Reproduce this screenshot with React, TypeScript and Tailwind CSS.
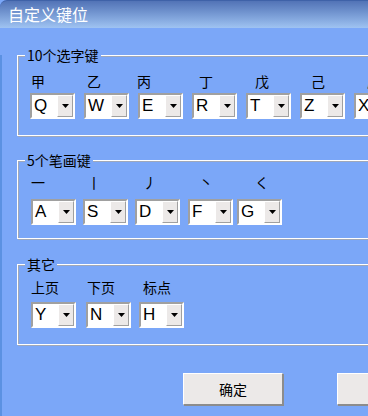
import type { ReactNode } from 'react'
import { clsx } from 'clsx'

const BODY = 'bg-[#7ba7f8]'

const stems = [
  { label: '甲', w: 'w-[56px]' },
  { label: '乙', w: 'w-[50px]' },
  { label: '丙', w: 'w-[62px]' },
  { label: '丁', w: 'w-[56px]' },
  { label: '戊', w: 'w-[56px]' },
  { label: '己', w: 'w-[56px]' },
  { label: '庚', w: 'w-[56px]' },
]
const stemKeys = ['Q', 'W', 'E', 'R', 'T', 'Z', 'X']

const strokes = ['一', '丨', '丿', '丶', 'く']
const strokeKeys = [
  { key: 'A', ml: 'ml-0' },
  { key: 'S', ml: 'ml-[7px]' },
  { key: 'D', ml: 'ml-[7px]' },
  { key: 'F', ml: 'ml-[8px]' },
  { key: 'G', ml: 'ml-[4px]' },
]

const others = ['上页', '下页', '标点']
const otherKeys = [
  { key: 'Y', ml: 'ml-0' },
  { key: 'N', ml: 'ml-[10px]' },
  { key: 'H', ml: 'ml-[8px]' },
]

function Group({ title, className, children }: { title: string; className?: string; children: ReactNode }) {
  return (
    <div
      className={clsx(
        'relative mr-[17px] border border-white pl-[13px] shadow-[inset_1px_1px_0_#a0a8b8,1px_1px_0_#a0a8b8]',
        className,
      )}
    >
      <span className={clsx('absolute -top-[10px] left-[7px] px-[2px] text-[14px] leading-[18px]', BODY)}>
        {title}
      </span>
      {children}
    </div>
  )
}

function Combo({ value, className }: { value: string; className?: string }) {
  return (
    <div
      className={clsx(
        'flex h-[26px] w-[45px] shrink-0 border-2 border-t-[#a0a0a0] border-r-white border-b-white border-l-[#a0a0a0] bg-white',
        className,
      )}
    >
      <span className="flex-1 pl-[2px] font-['Liberation_Sans',sans-serif] text-[17px] leading-[22px] text-black">
        {value}
      </span>
      <span className="flex w-[16px] items-center justify-center border border-t-white border-r-[#a0a0a0] border-b-[#a0a0a0] border-l-white bg-[#ece9e8]">
        <svg width="7" height="4" viewBox="0 0 7 4">
          <path d="M0 0h7L3.5 4z" fill="#000" />
        </svg>
      </span>
    </div>
  )
}

function Button({ children }: { children?: ReactNode }) {
  return (
    <button className="h-[32px] w-[100px] shrink-0 border border-t-white border-l-white border-r-[#8c8c8c] border-b-[#8c8c8c] bg-[#ece9e8] text-[14px] text-black shadow-[1px_1px_0_#8c8c8c]">
      {children}
    </button>
  )
}

export default function App() {
  return (
    <div className={clsx("h-[416px] w-[368px] overflow-hidden font-['Noto_Sans_CJK_SC',sans-serif] text-black", BODY)}>
      <div className="w-[470px]">
        <div className="h-[28px] rounded-tl-[7px] border-t border-[#3f62a8] bg-linear-to-b from-[#5273b6] to-[#9fc3f2] pl-[8px] text-[16px] leading-[26px] text-white">
          自定义键位
        </div>
        <div className="h-[388px] border-l-2 border-[#5b91e2] pl-[15px]">
          <Group title="10个选字键" className="mt-[27px] pt-[16px] pb-[16px]">
            <div className="flex text-[14px] leading-[18px]">
              {stems.map((s) => (
                <span key={s.label} className={clsx('shrink-0', s.w)}>
                  {s.label}
                </span>
              ))}
            </div>
            <div className="-ml-px mt-[3px] flex gap-[9px]">
              {stemKeys.map((k) => (
                <Combo key={k} value={k} />
              ))}
            </div>
          </Group>

          <Group title="5个笔画键" className="mt-[24px] pt-[12px] pb-[13px]">
            <div className="flex text-[14px] leading-[18px]">
              {strokes.map((s) => (
                <span key={s} className="w-[56px] shrink-0">
                  {s}
                </span>
              ))}
            </div>
            <div className="mt-[8px] flex">
              {strokeKeys.map((k) => (
                <Combo key={k.key} value={k.key} className={k.ml} />
              ))}
            </div>
          </Group>

          <Group title="其它" className="mt-[25px] pt-[13px] pb-[16px]">
            <div className="flex text-[14px] leading-[18px]">
              {others.map((s) => (
                <span key={s} className="w-[56px] shrink-0">
                  {s}
                </span>
              ))}
            </div>
            <div className="mt-[6px] flex">
              {otherKeys.map((k) => (
                <Combo key={k.key} value={k.key} className={k.ml} />
              ))}
            </div>
          </Group>

          <div className="mt-[28px] ml-[166px] flex gap-[54px]">
            <Button>确定</Button>
            <Button>取消</Button>
          </div>
        </div>
      </div>
    </div>
  )
}
